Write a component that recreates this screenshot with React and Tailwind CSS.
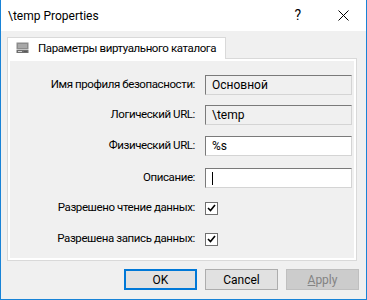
import React from 'react'

const font = { fontFamily: '"Segoe UI", Roboto, "Noto Sans", sans-serif' }

const TextField = ({ value, readOnly, caret }) => (
  <div
    className={`w-[147px] h-[20px] border border-t-[#7a7a7a] border-l-[#7a7a7a] border-b-[#d4d4d4] border-r-[#d4d4d4] flex items-center pl-[6px] text-[12px] text-black ${readOnly ? 'bg-[#f0f0f0]' : 'bg-white'}`}
  >
    {caret ? <span className="w-px h-[13px] bg-black" /> : value}
  </div>
)

const CheckBox = () => (
  <div className="w-[13px] h-[13px] border border-[#707070] bg-white flex items-center justify-center">
    <svg width="9" height="8" viewBox="0 0 9 8">
      <path d="M1 4 L3.5 6.5 L8 1" fill="none" stroke="#000" strokeWidth="1.6" />
    </svg>
  </div>
)

const Row = ({ label, children, className = '' }) => (
  <div className={`flex items-center h-[20px] ${className}`}>
    <div className="w-[186px] text-right text-[11.5px] tracking-[-0.4px] text-black pr-[1px] whitespace-nowrap">{label}</div>
    <div className="ml-[9px] flex items-center">{children}</div>
  </div>
)

const TabIcon = () => (
  <svg width="13" height="13" viewBox="0 0 13 13" className="shrink-0">
    <rect x="0.5" y="0.5" width="12" height="7" fill="#8c8c8c" />
    <rect x="2" y="2" width="9" height="4" fill="#a8a8a8" />
    <rect x="0.5" y="8" width="12" height="3" fill="#6e6e6e" />
    <rect x="2" y="9" width="4" height="1" fill="#d0d0d0" />
    <rect x="8" y="9" width="3" height="1" fill="#5a5a5a" />
  </svg>
)

const Button = ({ children, variant }) => {
  const styles = {
    primary: 'border-2 border-[#0078d7] bg-[#e1e1e1] text-black',
    normal: 'border border-[#adadad] bg-[#e1e1e1] text-black',
    disabled: 'border border-[#bfbfbf] bg-[#cccccc] text-[#838383]'
  }
  return (
    <div className={`w-[73px] h-[21px] flex items-center justify-center text-[12px] ${styles[variant]}`}>
      {children}
    </div>
  )
}

export default function App() {
  return (
    <div style={font} className="w-[367px] h-[300px] flex flex-col border-x border-b border-[#1883d7] bg-[#f0f0f0] overflow-hidden">
      {/* title bar */}
      <div className="h-[31px] bg-white flex items-center shrink-0">
        <div className="pl-[7px] text-[12px] text-black">\temp Properties</div>
        <div className="ml-auto text-[14px] text-black mr-[37px] font-normal">?</div>
        <svg width="11" height="11" viewBox="0 0 11 11" className="mr-[17px]">
          <path d="M0.5 0.5 L10.5 10.5 M10.5 0.5 L0.5 10.5" stroke="#000" strokeWidth="1" />
        </svg>
      </div>

      {/* tab strip */}
      <div className="pl-[6px] pt-[6px] flex">
        <div className="h-[22px] w-[219px] bg-white border border-b-0 border-[#d9d9d9] flex items-center pl-[8px] gap-[9px] text-[11.5px] tracking-[-0.4px] text-black -mb-px relative z-10 whitespace-nowrap">
          <TabIcon />
          <span>Параметры виртуального каталога</span>
        </div>
      </div>

      {/* tab page */}
      <div className="ml-[6px] mr-[9px] h-[203px] border border-[#d9d9d9]">
        <div className="h-full border-2 border-white pt-[14px] flex flex-col">
          <Row label="Имя профиля безопасности:">
            <TextField value="Основной" readOnly />
          </Row>
          <Row label="Логический URL:" className="mt-[10px]">
            <TextField value="\temp" readOnly />
          </Row>
          <Row label="Физический URL:" className="mt-[11px]">
            <TextField value="%s" />
          </Row>
          <Row label="Описание:" className="mt-[12px]">
            <TextField caret />
          </Row>
          <Row label="Разрешено чтение данных:" className="mt-[10px]">
            <CheckBox />
          </Row>
          <Row label="Разрешена запись данных:" className="mt-[11px]">
            <CheckBox />
          </Row>
        </div>
      </div>

      {/* buttons */}
      <div className="flex justify-end gap-[8px] pr-[7px] pt-[8px]">
        <Button variant="primary">OK</Button>
        <Button variant="normal">Cancel</Button>
        <Button variant="disabled">
          <span><span className="underline">A</span>pply</span>
        </Button>
      </div>
    </div>
  )
}
